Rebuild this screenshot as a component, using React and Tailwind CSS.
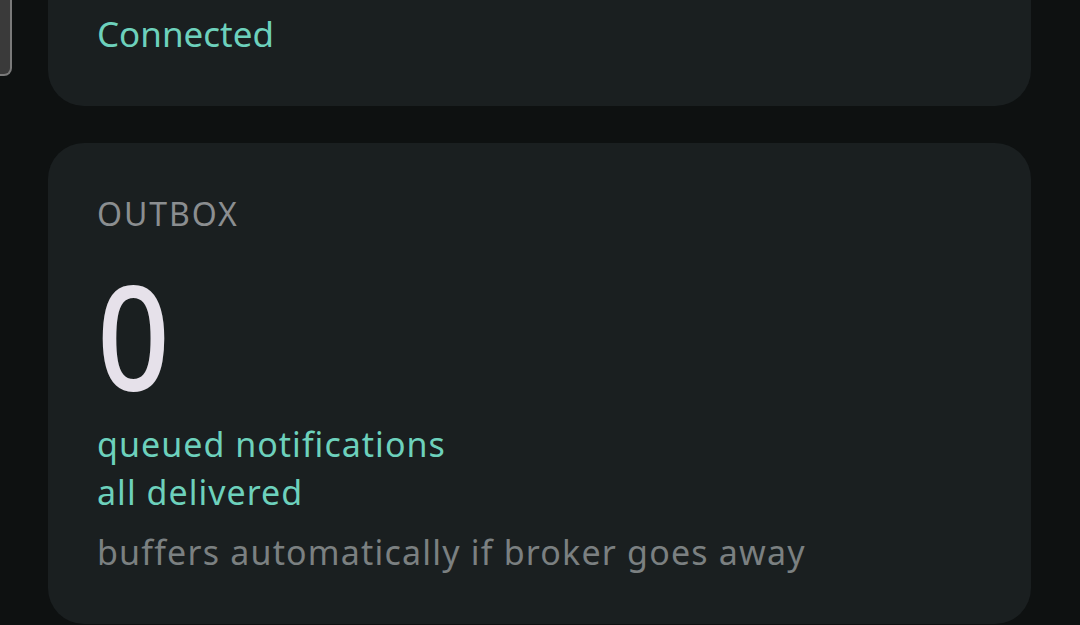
import React from 'react'

const Card = ({ className = '', children }) => (
  <div className={`rounded-[36px] bg-[#1a1f20] px-[49px] ${className}`}>{children}</div>
)

const App = () => {
  return (
    <div className="relative h-[625px] w-[1080px] overflow-hidden bg-[#0e1111] font-['Noto_Sans',sans-serif]">
      {/* scroll handle peeking in from the left */}
      <div className="absolute left-0 top-[-10px] h-[86px] w-[12px] rounded-br-[8px] border-2 border-l-0 border-[#7a7a7a] bg-[#3a3a3a]" />

      <div className="flex flex-col gap-[37px] pl-[48px] pr-[49px]">
        <Card className="-mt-[60px] pt-[70px] pb-[48px]">
          <div className="text-[35px] leading-[48px] text-[#6dd1bc]">Connected</div>
        </Card>

        <Card className="pt-[51px] pb-[48px]">
          <div className="text-[32px] leading-[40px] tracking-[0.06em] text-[#8b8e90]">OUTBOX</div>
          <div className="mt-[28px] origin-left scale-x-[0.88] text-[145px] font-medium leading-none text-[#e6e1ea]">0</div>
          <div className="mt-[13px] text-[34px] leading-[48px] tracking-[0.03em] text-[#6dd1bc]">
            <div>queued notifications</div>
            <div>all delivered</div>
          </div>
          <div className="mt-[12px] text-[34px] leading-[48px] tracking-[0.035em] text-[#7b8081]">
            buffers automatically if broker goes away
          </div>
        </Card>
      </div>
    </div>
  )
}

export default App
